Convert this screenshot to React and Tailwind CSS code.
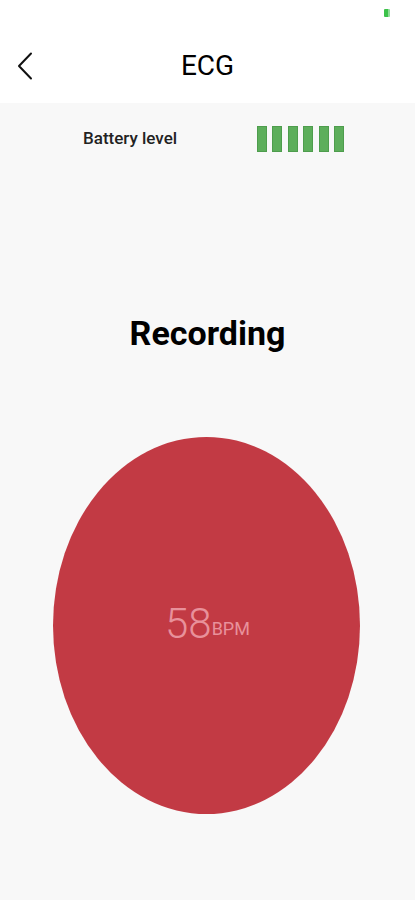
export default function App() {
  return (
    <div className="w-[415px] h-[900px] bg-[#f8f8f8] font-['Roboto',sans-serif] text-black overflow-hidden">
      <div className="bg-white h-[103px] flex flex-col">
        <div className="h-[26px] flex justify-end items-start pr-[25px] pt-[9px]">
          <div className="w-[6px] h-[8px] bg-[#3cc24a] rounded-[1px] border-r-2 border-r-[#8fdc97]" />
        </div>
        <div className="relative flex-1 flex items-center justify-center pt-[3px]">
          <svg className="absolute left-[17px] top-[26px]" width="16" height="28" viewBox="0 0 16 28" fill="none">
            <path d="M14 1.5 L2 14 L14 26.5" stroke="#111" strokeWidth="2" strokeLinecap="round" strokeLinejoin="round" />
          </svg>
          <span className="text-[28px] leading-none">ECG</span>
        </div>
      </div>
      <div className="mt-[22px] h-[27px] flex items-center">
        <span className="ml-[83px] text-[17px] font-medium text-[#222]">Battery level</span>
        <div className="ml-auto mr-[71px] flex gap-[5.4px] h-[26px]">
          {[0, 1, 2, 3, 4, 5].map((i) => (
            <div key={i} className="w-[10px] h-full bg-[#5dae5b] border border-[#4e9d4d]" />
          ))}
        </div>
      </div>
      <div className="mt-[161px] text-center text-[34px] leading-[40px] font-bold">Recording</div>
      <div className="mt-[84px] ml-[53px] w-[307px] h-[377px] rounded-[50%] bg-[#c23a44] flex items-center justify-center">
        <div className="flex items-baseline text-[#e8919b] ml-[2px] -mt-[4px]">
          <span className="text-[42px] font-light leading-none">58</span>
          <span className="text-[18px] leading-none relative -top-[3px]">BPM</span>
        </div>
      </div>
    </div>
  );
}
